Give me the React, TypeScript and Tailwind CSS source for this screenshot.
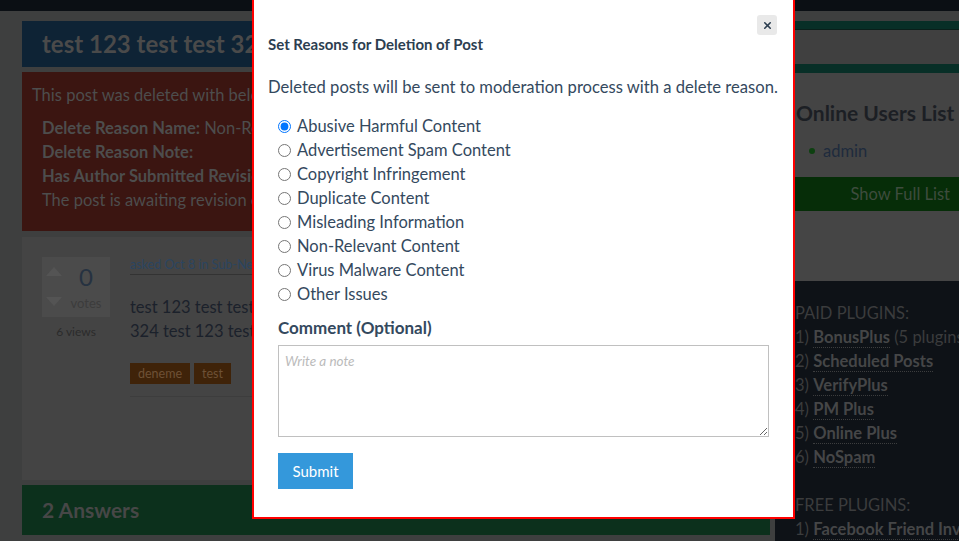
import { X } from "lucide-react"

const reasons = [
  "Abusive Harmful Content",
  "Advertisement Spam Content",
  "Copyright Infringement",
  "Duplicate Content",
  "Misleading Information",
  "Non-Relevant Content",
  "Virus Malware Content",
  "Other Issues",
]

const paidPlugins = [
  { name: "BonusPlus", note: " (5 plugins)" },
  { name: "Scheduled Posts", note: "" },
  { name: "VerifyPlus", note: "" },
  { name: "PM Plus", note: "" },
  { name: "Online Plus", note: "" },
  { name: "NoSpam", note: "" },
]

function PluginLink({ name }: { name: string }) {
  return <span className="font-bold text-[#454647] border-b border-dotted border-[#3c3d3e]">{name}</span>
}

function QuestionPage() {
  return (
    <div className="flex pl-[22px] pt-[10px] gap-[5px]">
      {/* main column */}
      <div className="w-[748px] shrink-0 flex flex-col">
        <div className="h-[46px] bg-[#0e2335] pl-[20px] flex items-center">
          <h1 className="text-[24px] font-bold text-[#4a4a4a] whitespace-nowrap">test 123 test test 324</h1>
        </div>

        <div className="mt-[5px] h-[159px] bg-[#3b1511] pt-[11px] pl-[10px] text-[16.5px] leading-[24px] text-[#4d4d4d] whitespace-nowrap">
          <p>This post was deleted with below reasons:</p>
          <div className="mt-[9px] pl-[10px]">
            <p>
              <b>Delete Reason Name:</b> Non-Relevant Content
            </p>
            <p>
              <b>Delete Reason Note:</b>
            </p>
            <p>
              <b>Has Author Submitted Revision:</b> No
            </p>
            <p>The post is awaiting revision of the author.</p>
          </div>
        </div>

        <div className="mt-[6px] h-[243px] bg-[#444444] p-[20px] flex gap-[20px]">
          <div className="w-[68px] shrink-0 flex flex-col">
            <div className="h-[60px] bg-[#4b4b4b] pl-[4px] flex">
              <div className="w-[16px] flex flex-col justify-between pt-[10px] pb-[11px]">
                <div className="w-0 h-0 border-l-[8px] border-r-[8px] border-b-[9px] border-l-transparent border-r-transparent border-b-[#545454]" />
                <div className="w-0 h-0 border-l-[8px] border-r-[8px] border-t-[9px] border-l-transparent border-r-transparent border-t-[#545454]" />
              </div>
              <div className="flex-1 flex flex-col items-center pt-[6px]">
                <span className="text-[24px] leading-[28px] text-[#263241]">0</span>
                <span className="mt-[4px] text-[13px] leading-[16px] text-[#3c3c3c]">votes</span>
              </div>
            </div>
            <p className="mt-[7px] text-center text-[12px] leading-[16px] text-[#2b2b2b]">6 views</p>
          </div>

          <div className="flex-1 min-w-0 flex flex-col">
            <div className="text-[12.5px] leading-[16px] text-[#2b4560] border-b border-[#333333] pb-[1px] whitespace-nowrap">
              asked Oct 8 in Sub-News by admin
            </div>
            <div className="mt-[20px] text-[16.5px] leading-[24px] text-[#1b212b] whitespace-nowrap">
              <p>test 123 test test 324 test 123 test test 324 test 123 test test</p>
              <p>324 test 123 test test 324 test 123 test test 324 test 123 test</p>
            </div>
            <div className="mt-[20px] flex gap-[4px]">
              <span className="h-[21px] px-[8px] bg-[#3f2309] text-[#6e5136] text-[12.5px] leading-[21px]">deneme</span>
              <span className="h-[21px] px-[8px] bg-[#3f2309] text-[#6e5136] text-[12.5px] leading-[21px]">test</span>
            </div>
            <div className="mt-[12px] border-t border-[#3d3d3d]" />
          </div>
        </div>

        <div className="mt-[5px] h-[50px] bg-[#0c301c] pl-[20px] flex items-center">
          <h2 className="text-[21px] font-bold text-[#474747]">2 Answers</h2>
        </div>
      </div>

      {/* sidebar */}
      <div className="flex-1 min-w-0 overflow-hidden whitespace-nowrap flex flex-col">
        <div className="h-[9px] bg-[#082f27] border-b border-[#0a1f1a]" />
        <div className="h-[34px] bg-[#404040]" />
        <div className="h-[9px] bg-[#082f27]" />
        <div className="h-[104px] bg-[#444444] pt-[26px] pl-[21px]">
          <h3 className="text-[21px] leading-[28px] font-bold text-[#1c1f24]">Online Users List</h3>
          <div className="mt-[12px] flex items-center leading-[24px] text-[16.5px] pl-[13px]">
            <span className="w-[6px] h-[6px] rounded-full bg-[#0d4010]" />
            <span className="ml-[8px] text-[#1e2b3d]">admin</span>
          </div>
        </div>
        <div className="h-[34px] bg-[#062d08] flex items-center justify-end pr-[9px] text-[16.5px] text-[#3e4c3e]">
          Show Full List
        </div>
        <div className="h-[70px] bg-[#454545]" />
        <div className="flex-1 bg-[#0e1217] pt-[20px] pl-[20px] text-[16.5px] leading-[24px] text-[#3b3c3d]">
          <p>PAID PLUGINS:</p>
          {paidPlugins.map((p, i) => (
            <p key={p.name}>
              {i + 1}) <PluginLink name={p.name} />
              {p.note}
            </p>
          ))}
          <p>&nbsp;</p>
          <p>FREE PLUGINS:</p>
          <p>
            1) <PluginLink name="Facebook Friend Invite" />
          </p>
        </div>
      </div>
    </div>
  )
}

function DeleteModal() {
  return (
    <div className="absolute left-[252px] top-[-2px] w-[543px] h-[521px] border-2 border-[#ff0000] bg-white pt-[34px] pl-[14px]">
      <button className="absolute top-[15px] right-[16px] w-[20px] h-[20px] rounded-[3px] bg-[#e9e9e9] flex items-center justify-center text-[#2c3e50]">
        <X size={11} strokeWidth={3.5} />
      </button>

      <h4 className="text-[15px] leading-[20px] font-bold text-[#2c3e50]">Set Reasons for Deletion of Post</h4>
      <p className="mt-[21px] text-[16.6px] leading-[24px] text-[#34495e]">
        Deleted posts will be sent to moderation process with a delete reason.
      </p>

      <div className="mt-[15px] pl-[10px] flex flex-col">
        {reasons.map((r, i) => (
          <label key={r} className="h-[24px] flex items-center text-[16.5px] text-[#34495e]">
            <input type="radio" name="reason" defaultChecked={i === 0} className="m-0 w-[13px] h-[13px]" />
            <span className="ml-[6px]">{r}</span>
          </label>
        ))}
      </div>

      <div className="pl-[10px]">
        <p className="mt-[10px] text-[17px] leading-[24px] font-bold text-[#34495e]">Comment (Optional)</p>
        <textarea
          placeholder="Write a note"
          className="mt-[5px] block w-[491px] h-[92px] border border-[#c0c0c0] px-[6px] py-[5px] text-[13.5px] placeholder:italic placeholder:text-[#bbbbbb]"
        />
        <button className="mt-[16px] h-[36px] w-[75px] bg-[#3498db] text-white text-[15px]">Submit</button>
      </div>
    </div>
  )
}

export default function App() {
  return (
    <div className="relative w-[959px] h-[541px] overflow-hidden bg-[#3e3f3f] font-['Lato',sans-serif]">
      <div className="h-[11px] bg-[#0b0f14]" />
      <QuestionPage />
      <DeleteModal />
    </div>
  )
}
